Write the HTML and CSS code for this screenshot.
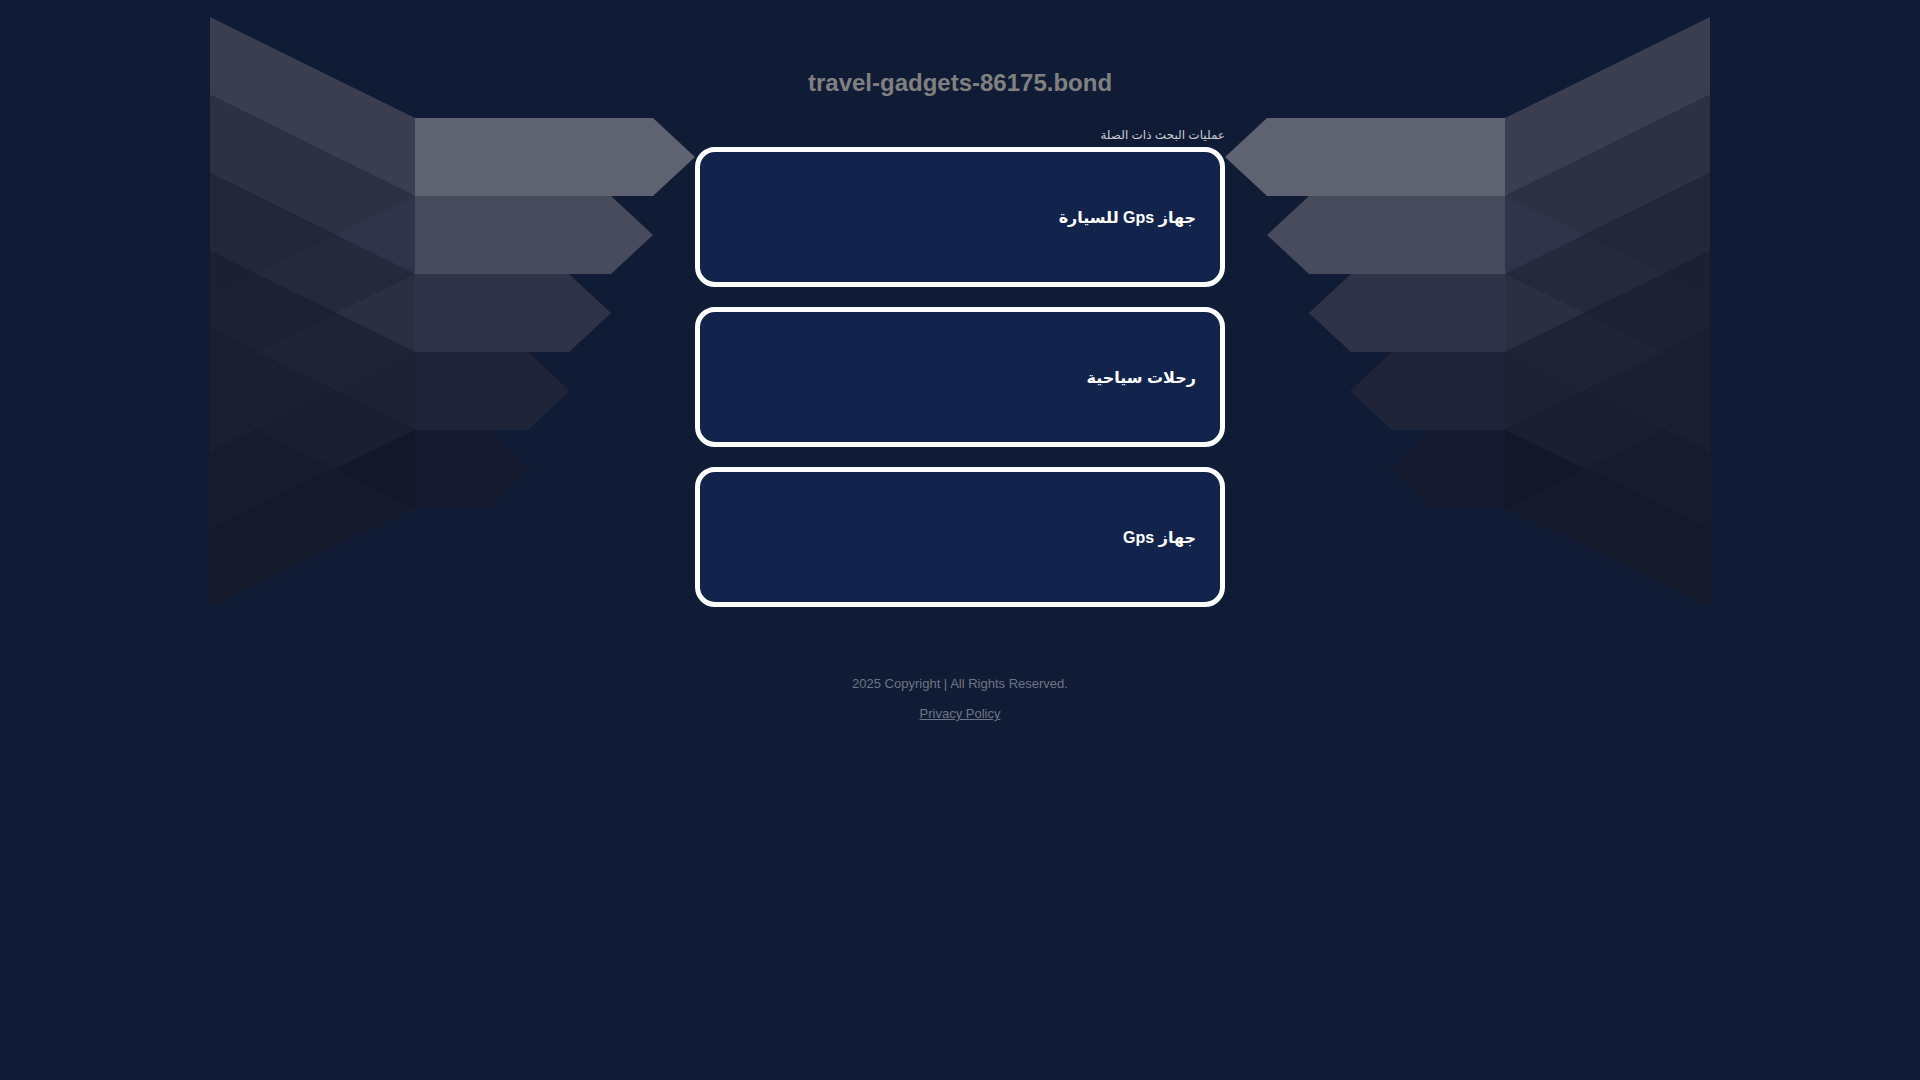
FILE: index.html
```html
<!DOCTYPE html>
<html lang="en">
<head>
<meta charset="utf-8">
<title>travel-gadgets-86175.bond</title>
<link rel="stylesheet" href="styles.css">
</head>
<body>
<div class="page">
  <svg class="wings" viewBox="0 0 1920 640" width="1920" height="640" aria-hidden="true">
    <defs>
      <clipPath id="cd1"><polygon points="210,95 415,196 415,274 210,173"/></clipPath>
      <clipPath id="cd2"><polygon points="210,173 415,274 415,352 210,251"/></clipPath>
      <clipPath id="cd3"><polygon points="210,251 415,352 415,430 210,329"/></clipPath>
      <clipPath id="cd4"><polygon points="210,329 415,430 415,508 210,407"/></clipPath>
      <clipPath id="cbelow"><polygon points="210,407 415,508 415,640 210,640"/></clipPath>
    </defs>
    <g id="wing">
      <polygon points="210,17 415,118 415,196 210,95" fill="#3a3e50"/>
      <polygon points="210,95 415,196 415,274 210,173" fill="#2d3144"/>
      <polygon points="210,173 415,274 415,352 210,251" fill="#23273a"/>
      <polygon points="210,251 415,352 415,430 210,329" fill="#1c2033"/>
      <polygon points="210,329 415,430 415,508 210,407" fill="#1b1f32"/>
      <g clip-path="url(#cd1)">
        <polygon points="415,196 210,296 210,374 415,274" fill="#30344a"/>
      </g>
      <g clip-path="url(#cd2)">
        <polygon points="415,196 210,296 210,374 415,274" fill="#25293c"/>
        <polygon points="415,274 210,374 210,452 415,352" fill="#2b2f42"/>
      </g>
      <g clip-path="url(#cd3)">
        <polygon points="415,196 210,296 210,374 415,274" fill="#1d2134"/>
        <polygon points="415,274 210,374 210,452 415,352" fill="#1f2336"/>
        <polygon points="415,352 210,452 210,530 415,430" fill="#1e2235"/>
      </g>
      <g clip-path="url(#cd4)">
        <polygon points="415,352 210,452 210,530 415,430" fill="#1a1e31"/>
        <polygon points="415,430 210,530 210,608 415,508" fill="#131729"/>
      </g>
      <g clip-path="url(#cbelow)">
        <polygon points="415,274 210,374 210,452 415,352" fill="#1b1f32"/>
        <polygon points="415,352 210,452 210,530 415,430" fill="#171b2e"/>
        <polygon points="415,430 210,530 210,608 415,508" fill="#141a2c"/>
      </g>
      <polygon points="415,118 653,118 695,157 653,196 415,196" fill="#5f6271"/>
      <polygon points="415,196 611,196 653,235 611,274 415,274" fill="#484b5c"/>
      <polygon points="415,274 569,274 611,313 569,352 415,352" fill="#2f3347"/>
      <polygon points="415,352 528,352 570,391 528,430 415,430" fill="#1f2337"/>
      <polygon points="415,430 487,430 529,469 487,508 415,508" fill="#151a2e"/>
    </g>
    <use href="#wing" transform="translate(1920,0) scale(-1,1)"/>
  </svg>

  <main class="content">
    <h1 class="title">travel-gadgets-86175.bond</h1>
    <div class="related" dir="rtl">عمليات البحث ذات الصلة</div>
    <div class="cards">
      <a class="card" href="#" dir="rtl"><span>جهاز Gps للسيارة</span></a>
      <a class="card" href="#" dir="rtl"><span>رحلات سياحية</span></a>
      <a class="card" href="#" dir="rtl"><span>جهاز Gps</span></a>
    </div>
  </main>

  <footer class="footer">
    <p class="copy">2025 Copyright | All Rights Reserved.</p>
    <a class="privacy" href="#">Privacy Policy</a>
  </footer>
</div>
</body>
</html>
```

FILE: styles.css
```css
html, body {
  margin: 0;
  padding: 0;
}

body {
  background: #101c36;
  font-family: Arial, "Liberation Sans", "DejaVu Sans", sans-serif;
}

.page {
  position: relative;
  min-height: 100vh;
  overflow: hidden;
}

.wings {
  position: absolute;
  top: 0;
  left: 0;
  width: 1920px;
  height: 640px;
  z-index: 0;
  pointer-events: none;
}

.content {
  position: relative;
  z-index: 1;
  width: 530px;
  margin: 0 auto;
}

.title {
  margin: 0;
  padding-top: 69px;
  font-size: 24px;
  line-height: 28px;
  font-weight: bold;
  color: #808080;
  text-align: center;
}

.related {
  margin-top: 30px;
  margin-bottom: 4px;
  height: 16px;
  font-size: 12px;
  line-height: 16px;
  color: #c9cbd1;
}

.cards {
  display: flex;
  flex-direction: column;
  gap: 20px;
}

.card {
  box-sizing: border-box;
  height: 140px;
  border: 5px solid #ffffff;
  border-radius: 20px;
  background: #12244b;
  display: flex;
  align-items: center;
  padding: 0 24px;
  color: #ffffff;
  font-weight: bold;
  font-size: 16px;
  text-decoration: none;
}

.footer {
  position: relative;
  z-index: 1;
  margin-top: 69px;
  text-align: center;
  font-size: 13px;
  line-height: 16px;
  color: #6f7585;
}

.copy {
  margin: 0;
}

.privacy {
  display: inline-block;
  margin-top: 14px;
  color: #6f7585;
  text-decoration: underline;
}
```
